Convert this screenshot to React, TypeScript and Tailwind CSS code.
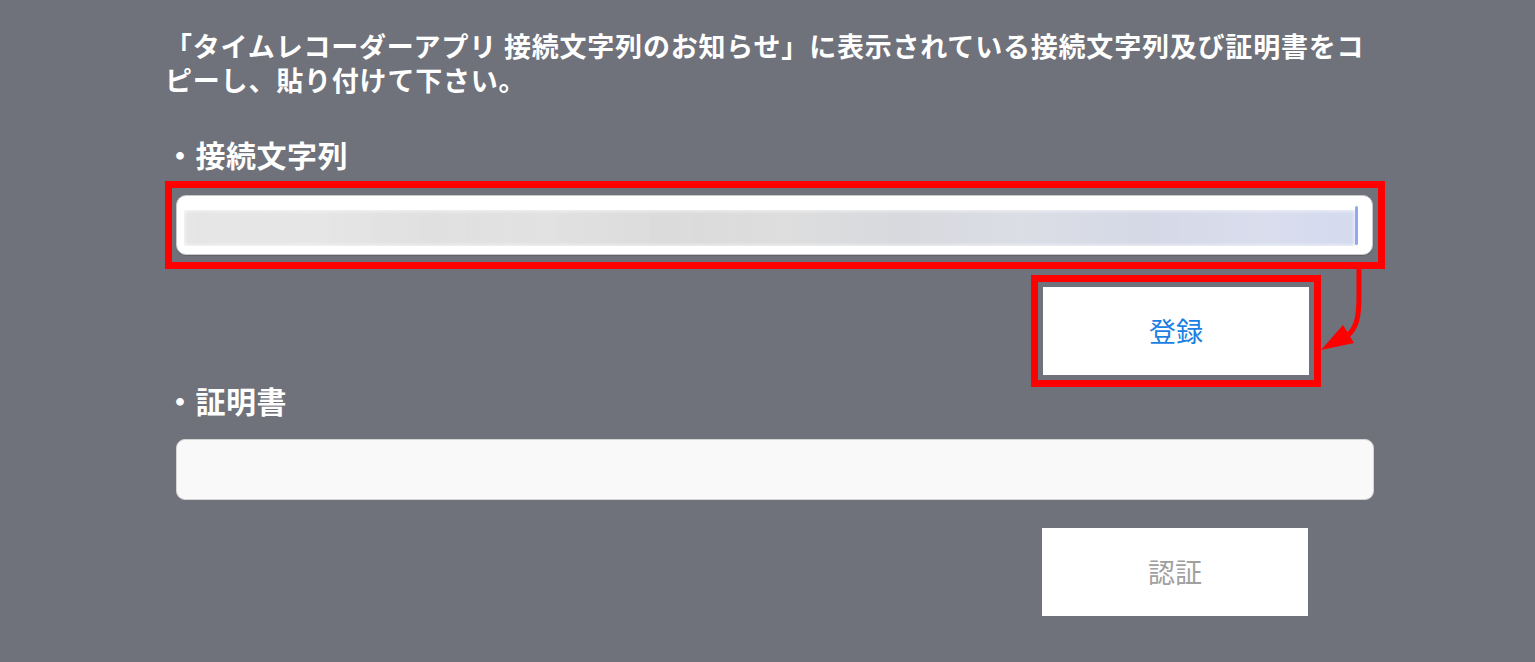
export default function App() {
  return (
    <div
      className="min-h-[662px] w-full bg-[#6f727a] text-white"
      style={{ fontFamily: '"Noto Sans CJK JP", "Noto Sans", sans-serif' }}
    >
      <div className="relative ml-[165px] w-[1220px] pt-[29px]">
        {/* Instruction */}
        <div className="whitespace-nowrap text-[27px] font-semibold leading-[34px] tracking-[0.8px]">
          <p>「タイムレコーダーアプリ 接続文字列のお知らせ」に表示されている接続文字列及び証明書をコ</p>
          <p>ピーし、貼り付けて下さい。</p>
        </div>

        {/* Connection string */}
        <h2 className="mt-[39px] text-[30px] font-bold leading-[36px] tracking-[0.5px]">・接続文字列</h2>
        <div className="mt-[9px] border-[7px] border-[#ff0000] px-[4px] py-[7px] pr-[5px]">
          <div className="flex h-[60px] items-start rounded-[10px] border border-[#c9c9c9] bg-white pl-[7px] pr-[14px] pt-[14px] shadow-[0_1px_1px_rgba(0,0,0,0.15)]">
            <div className="relative h-[36px] flex-1 overflow-hidden">
              <div className="absolute inset-0 bg-linear-to-r from-[#e6e6e6] via-[#d9d9d9] to-[#d3d9ee] blur-[2px]" />
              <div className="absolute inset-0 bg-[repeating-linear-gradient(90deg,rgba(255,255,255,0)_0px,rgba(255,255,255,0.12)_120px,rgba(255,255,255,0)_240px)]" />
            </div>
            <div className="-mt-[4px] h-[39px] w-[3px] rounded-full bg-[#93a9ee]" />
          </div>
        </div>

        <div className="mr-[64px] mt-[6px] flex justify-end">
          <div className="border-[7px] border-[#ff0000] p-[5px]">
            <button className="flex h-[88px] w-[266px] items-center justify-center bg-white text-[27px] text-[#1b7fe3]">
              登録
            </button>
          </div>
        </div>

        {/* Certificate */}
        <h2 className="mt-[-5px] text-[30px] font-bold leading-[36px] tracking-[0.5px]">・証明書</h2>
        <div className="mx-[11px] mt-[21px] h-[61px] rounded-[9px] border border-[#d4d4d4] bg-[#f9f9f9]" />

        <div className="mr-[77px] mt-[28px] flex justify-end">
          <button className="flex h-[88px] w-[266px] items-center justify-center bg-white text-[27px] text-[#a0a0a0]">
            認証
          </button>
        </div>

        {/* Arrow annotation */}
        <svg
          className="pointer-events-none absolute left-[1150px] top-[266px]"
          width="50"
          height="95"
          viewBox="0 0 50 95"
        >
          <path
            d="M44 3 L44 30 C44 50 42 62 32 70"
            fill="none"
            stroke="#ff0000"
            strokeWidth="5"
          />
          <polygon points="6,84 28,59 39,77" fill="#ff0000" />
        </svg>
      </div>
    </div>
  );
}
